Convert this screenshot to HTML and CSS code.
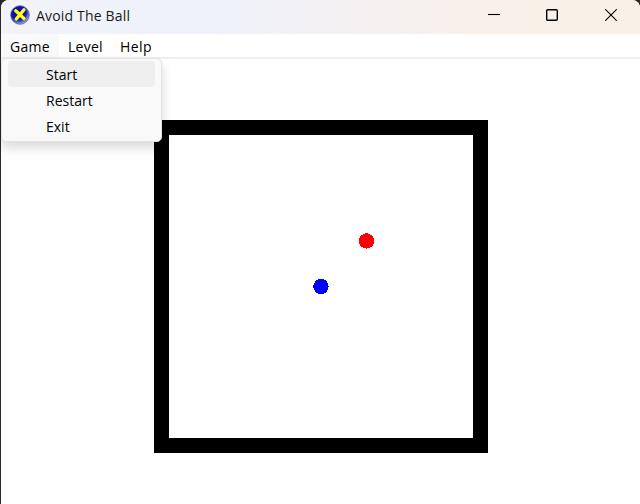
FILE: index.html
```html
<!DOCTYPE html>
<html lang="en">
<head>
<meta charset="utf-8">
<title>Avoid The Ball</title>
<link rel="stylesheet" href="styles.css">
</head>
<body>
<div class="window">
  <header class="titlebar">
    <svg class="app-icon" width="20" height="20" viewBox="0 0 20 20">
      <defs>
        <radialGradient id="orb" cx=".4" cy=".35" r=".68">
          <stop offset="0" stop-color="#0808a0"/>
          <stop offset=".6" stop-color="#1515b0"/>
          <stop offset="1" stop-color="#a9b4ea"/>
        </radialGradient>
      </defs>
      <circle cx="10" cy="10" r="9.3" fill="url(#orb)" stroke="#5058a0" stroke-width=".7"/>
      <path d="M5.7 5.8 14 13.5M14 4.7 6.3 14" stroke="#ffff16" stroke-width="3.3" stroke-linecap="round"/>
    </svg>
    <h1 class="title"><span>Avoid The Ball</span></h1>
    <div class="controls">
      <svg width="12" height="12" viewBox="0 0 12 12"><path d="M0 5.5h12"/></svg>
      <svg width="12" height="12" viewBox="0 0 12 12"><rect class="maximize" x=".7" y=".7" width="10.6" height="10.6" rx="1"/></svg>
      <svg class="close" width="12" height="12" viewBox="0 0 12 12"><path d="M.3.3l11.4 11.4M11.7.3.3 11.7"/></svg>
    </div>
  </header>
  <nav class="menubar">
    <div class="menu game open"><span>Game</span>
      <ul class="dropdown">
        <li class="active"><span>Start</span></li>
        <li><span>Restart</span></li>
        <li><span>Exit</span></li>
      </ul>
    </div>
    <div class="menu level"><span>Level</span></div>
    <div class="menu help"><span>Help</span></div>
  </nav>
  <main class="client">
    <div class="board">
      <svg width="304" height="303" viewBox="0 0 304 303" shape-rendering="crispEdges">
        <circle cx="197.5" cy="106" r="7.7" fill="#f00"/>
        <circle cx="152" cy="151.5" r="7.7" fill="#00f"/>
      </svg>
    </div>
  </main>
</div>
</body>
</html>
```
FILE: styles.css
```css
* { box-sizing: border-box; }
body {
  margin: 0;
  background: #29292b;
  font: 14px/20px "Open Sans", "Noto Sans", sans-serif;
  color: #000;
  overflow: hidden;
}
.window {
  height: 504px;
  margin-left: 1px;
  display: flex;
  flex-direction: column;
  background: #fff;
  border-radius: 8px 8px 0 0;
}
.titlebar {
  height: 34px;
  display: flex;
  align-items: center;
  padding: 0 23px 4px 9px;
  background: linear-gradient(90deg, #f3f2f8 0, #eef2fb 30%, #f3f1f4 50%, #f9f0e9 75%, #f9f1e8 100%);
  border-radius: 8px 8px 0 0;
}
.title {
  margin: 2px 0 0 6px;
  font: inherit;
  font-size: 14px;
  letter-spacing: .18px;
  color: #191919;
}
.controls {
  display: flex;
  gap: 46px;
  margin-left: auto;
}
.controls svg {
  fill: none;
  stroke: #000;
  stroke-width: 1.1;
}
.controls .maximize { stroke-width: 1.4; }
.controls .close { margin-left: 1px; }
.menubar {
  height: 25px;
  display: flex;
  border-bottom: 2px solid #efefef;
}
.menu {
  position: relative;
  padding: 3px 9px 0;
  height: 23px;
  letter-spacing: .25px;
}
.menu.game { width: 58px; }
.menu.level { width: 52px; }
.menu.help { letter-spacing: .45px; }
.menu.open { background: #f9f9f9; }
.dropdown {
  position: absolute;
  left: 0;
  top: 24px;
  width: 161px;
  height: 84px;
  margin: 0;
  padding: 2px 6px;
  list-style: none;
  letter-spacing: 0;
  background: #f9f9f9;
  border: 1px solid #e3e3e3;
  border-radius: 5px;
  box-shadow: 0 6px 12px rgba(0, 0, 0, .15);
}
.dropdown li {
  height: 26px;
  padding: 4px 0 0 38px;
  border-radius: 4px;
}
.dropdown .active { background: #efefef; }
.client {
  flex: 1;
  display: flex;
  align-items: flex-start;
  padding: 61px 0 0 153px;
}
.board {
  width: 334px;
  height: 333px;
  border: 15px solid #000;
}
.board svg { display: block; }
```
